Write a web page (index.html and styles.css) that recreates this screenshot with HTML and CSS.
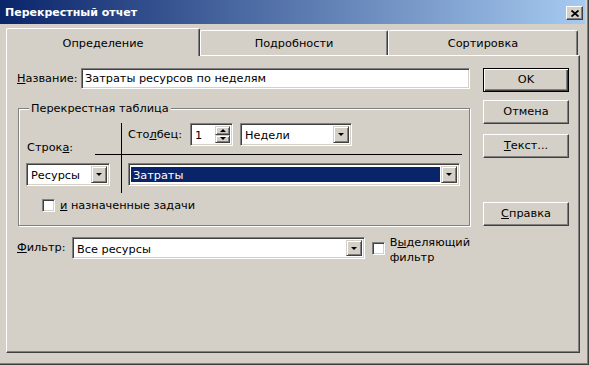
FILE: index.html
```html
<!DOCTYPE html>
<html lang="ru">
<head>
  <meta charset="UTF-8">
  <title>Перекрестный отчет</title>
  <link rel="stylesheet" href="styles.css">
</head>
<body>
  <div class="window">
    <div class="titlebar">
      <span class="title">Перекрестный отчет</span>
      <div class="close-btn">
        <svg width="8" height="7" viewBox="0 0 8 7">
          <path d="M0.5 0.5 L7.5 6.5 M7.5 0.5 L0.5 6.5" stroke="#000" stroke-width="1.8" fill="none"/>
        </svg>
      </div>
    </div>

    <div class="tabs">
      <div class="tab tab-active">Определение</div>
      <div class="tab tab-details">Подробности</div>
      <div class="tab tab-sort">Сортировка</div>
    </div>

    <div class="panel">
      <div class="main">
        <div class="name-row">
          <span class="lbl name-lbl"><u>Н</u>азвание:</span>
          <div class="field name-field">Затраты ресурсов по неделям</div>
        </div>

        <fieldset class="group">
          <legend>Перекрестная таблица</legend>
          <div class="cross">
            <div class="row-label">Строк<u>а</u>:</div>
            <div class="gap-cell"></div>
            <div class="col-cell">
              <span class="lbl col-lbl">Сто<u>л</u>бец:</span>
              <div class="spin">
                <span class="spin-text">1</span>
                <div class="spin-btns">
                  <div class="spin-btn"><span class="arrow-up"></span></div>
                  <div class="spin-btn"><span class="arrow-down"></span></div>
                </div>
              </div>
              <div class="combo combo-weeks">
                <span class="combo-text">Недели</span>
                <span class="drop"><span class="arrow-down"></span></span>
              </div>
            </div>
            <div class="row-cell">
              <div class="combo combo-rows">
                <span class="combo-text">Ресурсы</span>
                <span class="drop"><span class="arrow-down"></span></span>
              </div>
            </div>
            <div class="data-cell">
              <div class="combo combo-data">
                <span class="combo-text selected">Затраты</span>
                <span class="drop"><span class="arrow-down"></span></span>
              </div>
            </div>
          </div>
          <div class="check-row">
            <span class="checkbox"></span>
            <span><u>и</u> назначенные задачи</span>
          </div>
        </fieldset>

        <div class="filter-row">
          <span class="lbl filter-lbl"><u>Ф</u>ильтр:</span>
          <div class="combo combo-filter">
            <span class="combo-text">Все ресурсы</span>
            <span class="drop"><span class="arrow-down"></span></span>
          </div>
          <span class="checkbox filter-check"></span>
          <span class="filter-check-lbl">В<u>ы</u>деляющий<br>фильтр</span>
        </div>
      </div>

      <div class="side">
        <div class="btn btn-default">OK</div>
        <div class="btn btn-cancel">Отмена</div>
        <div class="btn btn-text"><u>Т</u>екст...</div>
        <div class="btn btn-help"><u>С</u>правка</div>
      </div>
    </div>
  </div>
</body>
</html>
```

FILE: styles.css
```css
* {
  box-sizing: border-box;
}

body {
  margin: 0;
  background: #d4d0c8;
  font-family: "DejaVu Sans", Tahoma, sans-serif;
  font-size: 11.3px;
  color: #000;
}

u {
  text-decoration: underline;
  text-underline-offset: 1px;
}

.window {
  width: 589px;
  height: 365px;
  padding: 0 3px 0 0;
  border-right: 1px solid #404040;
  border-bottom: 1px solid #404040;
  box-shadow: inset -1px -1px #808080;
  overflow: hidden;
}

/* title bar */
.titlebar {
  height: 24px;
  display: flex;
  align-items: center;
  justify-content: space-between;
  background: linear-gradient(to right, #0a246a, #a6caf0);
}

.title {
  padding-left: 5px;
  color: #fff;
  font-weight: bold;
  font-size: 11px;
}

.close-btn {
  width: 17px;
  height: 14px;
  margin: 2px 2px 0 0;
  display: flex;
  align-items: center;
  justify-content: center;
  background: #d4d0c8;
  border: 1px solid;
  border-color: #fff #404040 #404040 #fff;
  box-shadow: inset -1px -1px #808080;
}

/* tabs */
.tabs {
  height: 31px;
  display: flex;
  align-items: flex-end;
  padding-left: 6px;
}

.tab {
  height: 25px;
  padding-top: 6px;
  line-height: 13px;
  text-align: center;
  background: #d4d0c8;
  border-top: 1px solid #fff;
  border-left: 1px solid #fff;
  border-right: 1px solid #404040;
  box-shadow: inset -1px 0 #808080;
  border-radius: 2px 2px 0 0;
}

.tab-active {
  position: relative;
  z-index: 1;
  width: 194px;
  height: 28px;
  margin-bottom: -1px;
  padding-top: 8px;
}

.tab-details {
  width: 188px;
}

.tab-sort {
  width: 190px;
}

/* panel */
.panel {
  width: 574px;
  height: 298px;
  margin-left: 6px;
  display: flex;
  padding: 12px 0 0 10px;
  border-top: 1px solid #fff;
  border-left: 1px solid #fff;
  border-right: 1px solid #404040;
  border-bottom: 1px solid #404040;
  box-shadow: inset -1px -1px #808080;
}

.main {
  width: 453px;
}

.side {
  width: 86px;
  margin-left: 13px;
}

.lbl {
  flex-shrink: 0;
}

/* sunken controls */
.field,
.combo,
.spin {
  background: #fff;
  border: 1px solid;
  border-color: #808080 #fff #fff #808080;
  box-shadow: inset 1px 1px #404040, inset -1px -1px #d4d0c8;
}

.name-row {
  display: flex;
  align-items: center;
  height: 21px;
}

.name-lbl {
  width: 64px;
}

.name-field {
  width: 389px;
  height: 21px;
  padding: 3px 3px 0;
  line-height: 13px;
}

.combo {
  height: 23px;
  display: flex;
  padding: 2px;
}

.combo-text {
  flex: 1;
  padding: 3px 1px 0 2px;
  line-height: 13px;
  white-space: nowrap;
  overflow: hidden;
}

.combo-text.selected {
  background: #0a246a;
  color: #fff;
  margin: 1px 1px 1px 0;
  padding-top: 2px;
}

.drop,
.spin-btn {
  width: 16px;
  display: flex;
  align-items: center;
  justify-content: center;
  background: #d4d0c8;
  border: 1px solid;
  border-color: #d4d0c8 #404040 #404040 #d4d0c8;
  box-shadow: inset 1px 1px #fff, inset -1px -1px #808080;
}

.arrow-down {
  width: 0;
  height: 0;
  border-left: 3px solid transparent;
  border-right: 3px solid transparent;
  border-top: 3px solid #000;
}

.arrow-up {
  width: 0;
  height: 0;
  border-left: 3px solid transparent;
  border-right: 3px solid transparent;
  border-bottom: 3px solid #000;
}

/* group box */
.group {
  width: 452px;
  margin: 13px 0 0 1px;
  padding: 8px 7px 13px;
  border: 1px solid #808080;
  box-shadow: inset 1px 1px #fff, 1px 1px #fff;
}

.group legend {
  margin-left: 3px;
  padding: 0 2px;
  line-height: 13px;
  background: #d4d0c8;
}

.cross {
  display: grid;
  grid-template-columns: 69px 26px 341px;
  grid-template-rows: 32px 38px;
}

.row-label {
  display: flex;
  align-items: flex-end;
  padding: 0 0 1px 1px;
  line-height: 13px;
}

.gap-cell {
  border-bottom: 1px solid #000;
}

.col-cell {
  display: flex;
  align-items: center;
  align-self: stretch;
  height: 32px;
  padding: 0 0 8px 6px;
  border-left: 1px solid #000;
  border-bottom: 1px solid #000;
}

.col-lbl {
  width: 62px;
}

.spin {
  width: 43px;
  height: 23px;
  display: flex;
  padding: 2px;
}

.spin-text {
  flex: 1;
  padding: 3px 0 0 2px;
  line-height: 13px;
}

.spin-btns {
  display: flex;
  flex-direction: column;
}

.spin-btn {
  flex: 1;
  width: 15px;
}

.combo-weeks {
  width: 112px;
  margin-left: 7px;
}

.row-cell {
  grid-column: 1 / 3;
  padding-top: 8px;
}

.combo-rows {
  width: 84px;
}

.data-cell {
  padding: 8px 0 0 6px;
  border-left: 1px solid #000;
}

.combo-data {
  width: 332px;
}

.check-row {
  display: flex;
  align-items: center;
  height: 13px;
  margin-top: 6px;
  padding-left: 16px;
  gap: 5px;
}

.checkbox {
  width: 13px;
  height: 13px;
  flex-shrink: 0;
  background: #fff;
  border: 1px solid;
  border-color: #808080 #fff #fff #808080;
  box-shadow: inset 1px 1px #404040, inset -1px -1px #d4d0c8;
}

/* filter */
.filter-row {
  display: flex;
  align-items: flex-start;
  margin-top: 11px;
}

.filter-lbl {
  width: 55px;
  line-height: 22px;
}

.combo-filter {
  width: 298px;
  height: 22px;
}

.filter-check {
  margin: 5px 0 0 7px;
}

.filter-check-lbl {
  margin: -2px 0 0 5px;
  line-height: 15px;
  white-space: nowrap;
}

/* buttons */
.btn {
  height: 24px;
  line-height: 22px;
  text-align: center;
  background: #d4d0c8;
  border: 1px solid;
  border-color: #fff #404040 #404040 #fff;
  box-shadow: inset -1px -1px #808080;
}

.btn-default {
  border-color: #000;
  box-shadow: inset 1px 1px #fff, inset -1px -1px #404040, inset -2px -2px #808080;
}

.btn-cancel {
  margin-top: 8px;
}

.btn-text {
  margin-top: 10px;
}

.btn-help {
  margin-top: 44px;
}
```
